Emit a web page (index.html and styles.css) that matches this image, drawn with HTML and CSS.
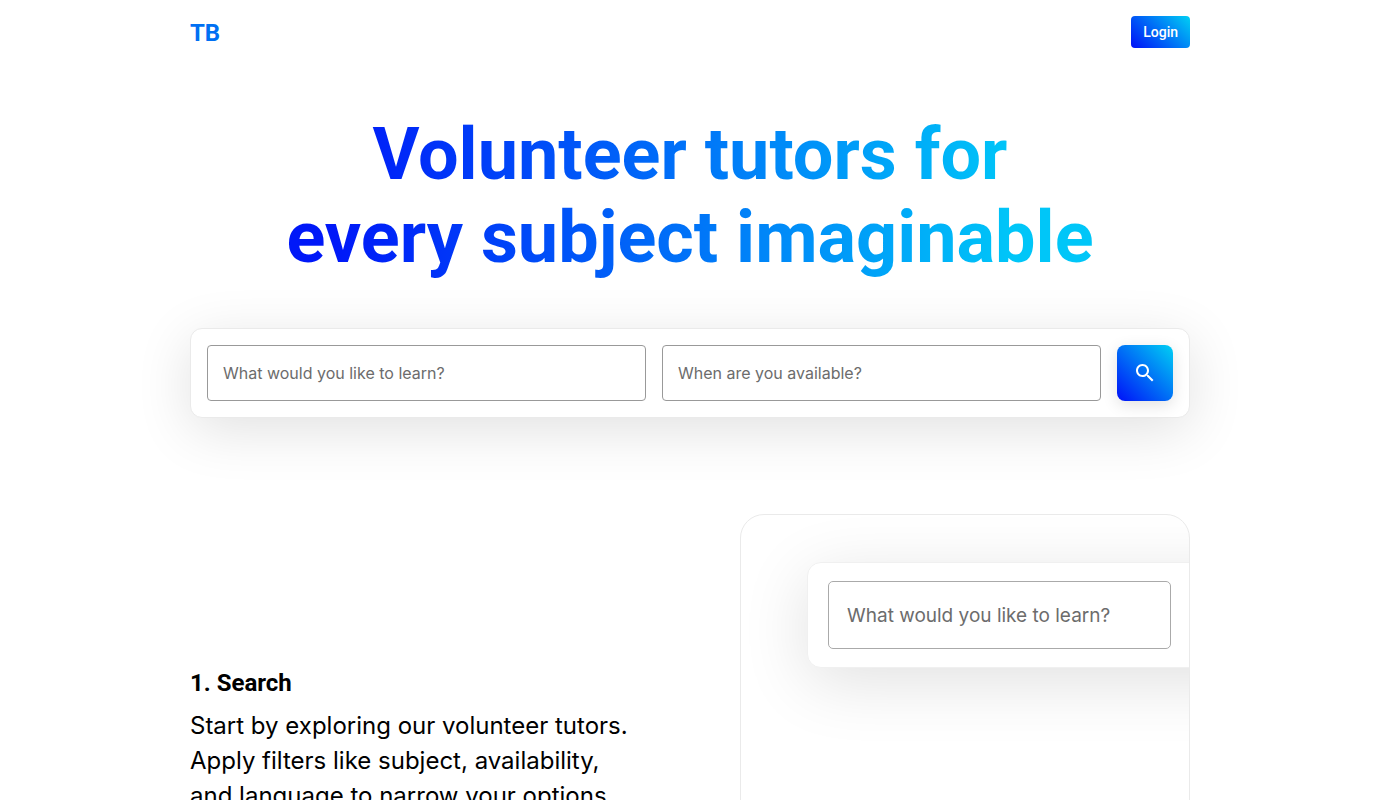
FILE: index.html
```
<!DOCTYPE html>
<html lang="en">
<head>
<meta charset="utf-8">
<meta name="viewport" content="width=device-width, initial-scale=1">
<title>TB</title>
<link rel="stylesheet" href="styles.css">
</head>
<body>
<div class="container">
  <header class="header">
    <a class="logo" href="#">TB</a>
    <button class="login" type="button">Login</button>
  </header>
  <main>
    <h1 class="title"><span class="title-text">Volunteer tutors for<br>every subject imaginable</span></h1>
    <form class="search">
      <input class="field" type="text" aria-label="Subject" placeholder="What would you like to learn?">
      <input class="field" type="text" aria-label="Availability" placeholder="When are you available?">
      <button class="search-button" type="submit" aria-label="Search">
        <svg viewBox="0 0 24 24" width="24" height="24" fill="currentColor" aria-hidden="true"><path d="M15.5 14h-.79l-.28-.27C15.41 12.59 16 11.11 16 9.5 16 5.91 13.09 3 9.5 3S3 5.91 3 9.5 5.91 16 9.5 16c1.61 0 3.09-.59 4.23-1.57l.27.28v.79l5 4.99L20.49 19l-4.99-5zm-6 0C7.01 14 5 11.99 5 9.5S7.01 5 9.5 5 14 7.01 14 9.5 11.99 14 9.5 14z"/></svg>
      </button>
    </form>
    <section class="step">
      <div class="step-copy">
        <h2 class="step-title">1. Search</h2>
        <p class="step-text">Start by exploring our volunteer tutors. Apply filters like subject, availability, and language to narrow your options.</p>
      </div>
      <div class="preview">
        <div class="preview-search">
          <input class="preview-field" type="text" aria-label="Search preview" placeholder="What would you like to learn?" readonly tabindex="-1">
        </div>
      </div>
    </section>
  </main>
</div>
</body>
</html>
```
FILE: styles.css
```
* {
  box-sizing: border-box;
}

body {
  margin: 0;
  background: #fff;
  color: #000;
  font-family: Inter, sans-serif;
}

.container {
  max-width: 1000px;
  margin: 0 auto;
}

.header {
  display: flex;
  align-items: center;
  justify-content: space-between;
  padding: 16px 0;
}

.logo {
  padding-top: 2px;
  color: #0070f3;
  font: 700 24px/30px Roboto, sans-serif;
  text-decoration: none;
}

.login {
  padding: 0 12px;
  border: 0;
  border-radius: 4px;
  background: linear-gradient(45deg, #0010f8, #00d0f4);
  color: #fff;
  font: 500 14px/32px Roboto, sans-serif;
}

.title {
  margin: 49px 0;
  font: 700 72px/83px Roboto, sans-serif;
  text-align: center;
}

.title-text {
  display: inline-block;
  background: linear-gradient(90deg, #0018f8 6%, #00c6f8 90%);
  background-clip: text;
  -webkit-background-clip: text;
  color: transparent;
}

.search {
  display: flex;
  gap: 16px;
  padding: 16px;
  border: 1px solid #eaeaea;
  border-radius: 12px;
  background: #fff;
  box-shadow: 0 12px 56px rgba(0, 0, 0, 0.12);
}

.field {
  flex: 1;
  min-width: 0;
  height: 56px;
  padding: 0 15px;
  border: 1px solid #999;
  border-radius: 4px;
  background: #fff;
  font: 16px Inter, sans-serif;
}

.field::placeholder,
.preview-field::placeholder {
  color: #6c6c6c;
  opacity: 1;
}

.search-button {
  display: grid;
  place-items: center;
  width: 56px;
  height: 56px;
  padding: 0;
  border: 0;
  border-radius: 8px;
  background: linear-gradient(45deg, #0010f8, #00d0f4);
  box-shadow: 0 4px 16px rgba(0, 0, 0, 0.12);
  color: #fff;
}

.step {
  display: grid;
  grid-template-columns: 1fr 1fr;
  gap: 100px;
  align-items: center;
  margin: 96px 0;
}

.step-copy {
  padding-top: 3px;
}

.step-title {
  margin: 0 0 11px;
  font: 700 24px/28px Roboto, sans-serif;
}

.step-text {
  margin: 0;
  font-size: 24px;
  line-height: 35px;
}

.preview {
  aspect-ratio: 1;
  padding-top: 47px;
  padding-left: 66px;
  overflow: hidden;
  border: 1px solid #eaeaea;
  border-radius: 24px;
}

.preview-search {
  width: 150%;
  padding: 18px 20px;
  border: 1px solid #f0f0f0;
  border-radius: 14px;
  background: #fff;
  box-shadow: 0 14px 67px rgba(0, 0, 0, 0.12);
}

.preview-field {
  display: block;
  width: 343px;
  height: 68px;
  padding: 0 18px;
  border: 1px solid #aaa;
  border-radius: 5px;
  font: 19px Inter, sans-serif;
}
```
